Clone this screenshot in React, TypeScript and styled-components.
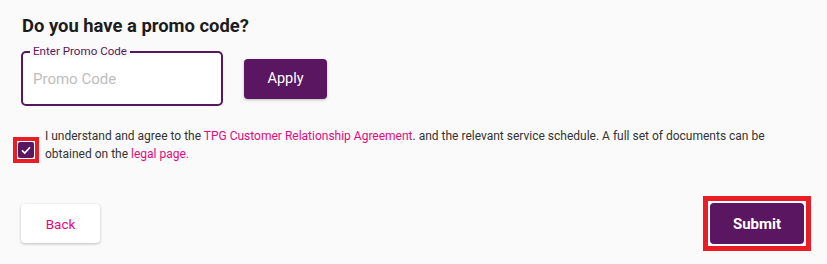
import React, { useState } from 'react'
import styled, { createGlobalStyle } from 'styled-components'

const GlobalStyle = createGlobalStyle`
  body {
    margin: 0;
    background: #fafafa;
    font-family: Roboto, "Liberation Sans", Arial, sans-serif;
    color: #333;
  }
`

const PURPLE = '#5a1660'
const PINK = '#e5097f'
const RED = '#ec1c24'

const Page = styled.div`
  width: 827px;
  height: 264px;
  box-sizing: border-box;
  padding: 14px 23px 0 21px;
`

const Heading = styled.h2`
  margin: 0 0 0 1px;
  font-size: 18.4px;
  font-weight: 700;
  color: #1c1c1c;
  line-height: 24px;
`

const PromoRow = styled.div`
  display: flex;
  align-items: center;
  gap: 21px;
  margin-top: 13px;
`

const Field = styled.label`
  position: relative;
  display: flex;
  align-items: center;
  width: 202px;
  height: 55px;
  box-sizing: border-box;
  border: 2px solid ${PURPLE};
  border-radius: 5px;
  background: #fff;
  padding: 0 10px;
`

const FieldLabel = styled.span`
  position: absolute;
  top: -8px;
  left: 7px;
  padding: 0 3px;
  background: #fafafa;
  font-size: 11.6px;
  line-height: 13px;
  color: ${PURPLE};
`

const Input = styled.input`
  border: none;
  outline: none;
  background: transparent;
  width: 100%;
  font-family: inherit;
  font-size: 15px;
  color: #333;
  padding: 0;
  caret-color: #333;
  &::placeholder {
    color: #bdbdbd;
  }
`

const Button = styled.button<{ $variant: 'primary' | 'secondary'; $bold?: boolean }>`
  border: none;
  border-radius: 4px;
  font-family: inherit;
  cursor: pointer;
  background: ${(p) => (p.$variant === 'primary' ? PURPLE : '#fff')};
  color: ${(p) => (p.$variant === 'primary' ? '#fff' : PINK)};
  font-weight: ${(p) => (p.$bold ? 700 : 400)};
  box-shadow: 0 1px 3px rgba(0, 0, 0, 0.25);
`

const ApplyButton = styled(Button)`
  width: 83px;
  height: 40px;
  font-size: 14.5px;
`

/* red square highlight drawn around a control */
const Highlight = styled.span<{ $thick: number; $gap: number }>`
  display: inline-flex;
  flex: none;
  border: ${(p) => p.$thick}px solid ${RED};
  padding: ${(p) => p.$gap}px;
  background: #fff;
`

const AgreeRow = styled.div`
  display: flex;
  align-items: flex-start;
  gap: 6px;
  margin-top: 21px;
  margin-left: -8px;
`

const CheckWrap = styled(Highlight)`
  margin-top: 10px;
`

const Check = styled.span`
  width: 16px;
  height: 16px;
  border-radius: 2px;
  background: ${PURPLE};
  display: flex;
  align-items: center;
  justify-content: center;
`

const AgreeText = styled.p`
  margin: 0;
  max-width: 740px;
  font-size: 12px;
  line-height: 18px;
  color: #333;
`

const TextLink = styled.a`
  color: ${PINK};
  text-decoration: none;
`

const Footer = styled.div`
  display: flex;
  justify-content: space-between;
  align-items: center;
  margin-top: 33px;
  margin-right: -7px;
`

const BackButton = styled(Button)`
  width: 79px;
  height: 39px;
  font-size: 13.5px;
`

const SubmitButton = styled(Button)`
  width: 94px;
  height: 41px;
  font-size: 15px;
  box-shadow: none;
`

export default function App() {
  const [code, setCode] = useState('')
  return (
    <Page>
      <GlobalStyle />
      <Heading>Do you have a promo code?</Heading>
      <PromoRow>
        <Field>
          <FieldLabel>Enter Promo Code</FieldLabel>
          <Input
            autoFocus
            placeholder="Promo Code"
            value={code}
            onChange={(e) => setCode(e.target.value)}
          />
        </Field>
        <ApplyButton $variant="primary">Apply</ApplyButton>
      </PromoRow>
      <AgreeRow>
        <CheckWrap $thick={4} $gap={1}>
          <Check>
            <svg width="12" height="12" viewBox="0 0 12 12">
              <path d="M2 6.3 L4.8 9 L10 3.2" fill="none" stroke="#fff" strokeWidth="1.6" />
            </svg>
          </Check>
        </CheckWrap>
        <AgreeText>
          I understand and agree to the{' '}
          <TextLink href="#">TPG Customer Relationship Agreement</TextLink>. and the relevant
          service schedule. A full set of documents can be obtained on the{' '}
          <TextLink href="#">legal page.</TextLink>
        </AgreeText>
      </AgreeRow>
      <Footer>
        <BackButton $variant="secondary">Back</BackButton>
        <Highlight $thick={5} $gap={2}>
          <SubmitButton $variant="primary" $bold>
            Submit
          </SubmitButton>
        </Highlight>
      </Footer>
    </Page>
  )
}
